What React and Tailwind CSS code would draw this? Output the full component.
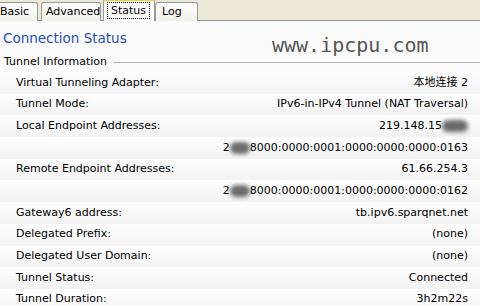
import React from "react";

const Blob = ({ w = 20 }) => (
  <span className="inline-block relative align-middle" style={{ width: w, height: 12 }}>
    <span className="absolute inset-0 rounded-full bg-[#6a6a6a] blur-[2px]" />
  </span>
);

const Row = ({ label, children }) => (
  <div className="flex items-center justify-between h-[21.7px] pl-[16px] pr-[12px] bg-gradient-to-b from-white to-[#f2f2f2]">
    <span>{label}</span>
    <span className="flex items-center">{children}</span>
  </div>
);

export default function App() {
  return (
    <div className="w-[480px] h-[305px] overflow-hidden bg-white text-[#000] text-[11px]" style={{ fontFamily: "Tahoma, 'DejaVu Sans', sans-serif" }}>
      {/* tab bar */}
      <div className="h-[21px] bg-[#ece9d8] flex items-end border-b border-[#919b9c] ml-[-6px]">
        <div className="h-[19px] w-[44px] pl-[5px] flex items-center bg-gradient-to-b from-[#fefefe] to-[#f0efe8] border border-b-0 border-[#919b9c] rounded-t-[3px] mb-[-1px] mr-[3px]">Basic</div>
        <div className="h-[19px] w-[60px] pl-[4px] flex items-center bg-gradient-to-b from-[#fefefe] to-[#f0efe8] border border-b-0 border-[#919b9c] rounded-t-[3px] mb-[-1px] mr-[2px]">Advanced</div>
        <div className="h-[22px] w-[52px] px-[3px] flex items-start bg-white border border-b-0 border-[#919b9c] border-t-2 border-t-[#ffc83c] rounded-t-[3px] mb-[-1px] pt-[1px] z-10">
          <span className="border border-dotted border-black px-[3px] leading-[15px]">Status</span>
        </div>
        <div className="h-[19px] w-[43px] pl-[6px] flex items-center bg-gradient-to-b from-[#fefefe] to-[#f0efe8] border border-b-0 border-[#919b9c] rounded-t-[3px] mb-[-1px]">Log</div>
      </div>
      <div className="bg-[#fbfbfb]">
        <div className="flex items-center h-[31px] pl-[3px] pt-[4px]">
          <span className="text-[13.5px] text-[#1f4fbf] w-[269px]">Connection Status</span>
          <span className="text-[20px] text-[#555] mt-[12px]" style={{ fontFamily: "'DejaVu Sans Mono', monospace" }}>www.ipcpu.com</span>
        </div>
        <div className="flex items-center h-[18px] pl-[4px] pt-[2px]">
          <span>Tunnel Information</span>
          <div className="flex-1 h-px bg-[#b0b0b0] ml-[6px]" />
        </div>
        <div className="pt-[2px]">
          <Row label="Virtual Tunneling Adapter:"><span style={{ fontFamily: "Tahoma, 'DejaVu Sans', 'Noto Sans CJK SC', sans-serif" }}>本地连接 2</span></Row>
          <Row label="Tunnel Mode:">IPv6-in-IPv4 Tunnel (NAT Traversal)</Row>
          <Row label="Local Endpoint Addresses:"><span>219.148.15</span><Blob w={26} /></Row>
          <Row label=""><span>2</span><Blob w={20} /><span>8000:0000:0001:0000:0000:0000:0163</span></Row>
          <Row label="Remote Endpoint Addresses:">61.66.254.3</Row>
          <Row label=""><span>2</span><Blob w={20} /><span>8000:0000:0001:0000:0000:0000:0162</span></Row>
          <Row label="Gateway6 address:">tb.ipv6.sparqnet.net</Row>
          <Row label="Delegated Prefix:">(none)</Row>
          <Row label="Delegated User Domain:">(none)</Row>
          <Row label="Tunnel Status:">Connected</Row>
          <Row label="Tunnel Duration:">3h2m22s</Row>
        </div>
      </div>
    </div>
  );
}
